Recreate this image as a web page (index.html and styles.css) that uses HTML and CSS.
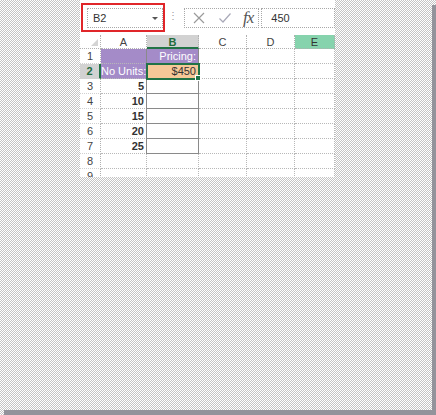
FILE: index.html
```html
<!DOCTYPE html>
<html>
<head>
<meta charset="utf-8">
<link rel="stylesheet" href="styles.css">
</head>
<body>
<div class="page">
  <div class="panel">
    <div class="fbar">
      <div class="namewrap">
        <div class="namebox"><span>B2</span><span class="arrow"></span></div>
      </div>
      <div class="sep">&#8942;</div>
      <div class="btns">
        <svg class="ico" width="14" height="14" viewBox="0 0 14 14"><path d="M2 2 L12 12 M12 2 L2 12" stroke="#9a9a9a" stroke-width="1.2" fill="none"/></svg>
        <svg class="ico" width="14" height="14" viewBox="0 0 14 14"><path d="M1.5 7.5 L5 11 L12.5 2.5" stroke="#a9a9b8" stroke-width="1.2" fill="none"/></svg>
        <span class="fx">fx</span>
      </div>
      <div class="input">450</div>
    </div>
    <div class="grid">
      <div class="corner"><span class="tri"></span></div>
      <div class="ch">A</div>
      <div class="ch chsel">B</div>
      <div class="ch">C</div>
      <div class="ch">D</div>
      <div class="ch che">E</div>

      <div class="rh">1</div>
      <div class="c purple"></div>
      <div class="c purple bcol txt-w">Pricing:</div>
      <div class="c"></div><div class="c"></div><div class="c"></div>

      <div class="rh rhsel">2</div>
      <div class="c purple txt-w">No Units:</div>
      <div class="c orange sel">$450<span class="handle"></span></div>
      <div class="c"></div><div class="c"></div><div class="c"></div>

      <div class="rh">3</div>
      <div class="c num">5</div>
      <div class="c bcol"></div>
      <div class="c"></div><div class="c"></div><div class="c"></div>

      <div class="rh">4</div>
      <div class="c num">10</div>
      <div class="c bcol"></div>
      <div class="c"></div><div class="c"></div><div class="c"></div>

      <div class="rh">5</div>
      <div class="c num">15</div>
      <div class="c bcol"></div>
      <div class="c"></div><div class="c"></div><div class="c"></div>

      <div class="rh">6</div>
      <div class="c num">20</div>
      <div class="c bcol"></div>
      <div class="c"></div><div class="c"></div><div class="c"></div>

      <div class="rh">7</div>
      <div class="c num">25</div>
      <div class="c bcol"></div>
      <div class="c"></div><div class="c"></div><div class="c"></div>

      <div class="rh">8</div>
      <div class="c"></div><div class="c"></div>
      <div class="c"></div><div class="c"></div><div class="c"></div>

      <div class="rh">9</div>
      <div class="c"></div><div class="c"></div>
      <div class="c"></div><div class="c"></div><div class="c"></div>
    </div>
  </div>
</div>
</body>
</html>
```

FILE: styles.css
```css
html, body {
  margin: 0;
  padding: 0;
}
body {
  width: 436px;
  height: 415px;
  background-color: #ffffff;
  background-image: conic-gradient(#c4c4c4 25%, #ffffff 0 50%, #c4c4c4 0 75%, #ffffff 0);
  background-size: 2px 2px;
  font-family: "Liberation Sans", Arial, sans-serif;
  font-size: 11px;
  color: #333;
  overflow: hidden;
}
.page {
  width: 432px;
  height: 410px;
  background-color: #ffffff;
  background-image: conic-gradient(#c4c4c4 25%, #ffffff 0 50%, #c4c4c4 0 75%, #ffffff 0);
  background-size: 2px 2px;
  box-shadow: 4px 5px 0 0 #93939b;
}
.panel {
  margin-left: 80px;
  width: 255px;
  height: 177px;
  background: #fff;
  overflow: hidden;
}
.fbar {
  display: flex;
  align-items: flex-start;
  height: 35px;
}
.namewrap {
  margin-top: 3px;
  margin-left: 1px;
  border: 2px solid #e0262a;
  padding: 3px 0 0 4px;
  box-sizing: border-box;
  width: 85px;
  height: 29px;
}
.namebox {
  width: 76px;
  height: 20px;
  box-sizing: border-box;
  border: 1px dotted #a8a8a8;
  display: flex;
  align-items: center;
  justify-content: space-between;
  padding: 0 4px 0 5px;
  color: #333;
}
.arrow {
  width: 0;
  height: 0;
  border-left: 3px solid transparent;
  border-right: 3px solid transparent;
  border-top: 3px solid #555;
}
.sep {
  margin-left: 3px;
  margin-top: 10px;
  width: 10px;
  color: #999;
  font-size: 10px;
  line-height: 12px;
}
.btns {
  margin-left: 6px;
  margin-top: 8px;
  width: 82px;
  height: 20px;
  box-sizing: border-box;
  border: 1px dotted #a8a8a8;
  display: flex;
  align-items: center;
  padding-left: 7px;
  gap: 12px;
}
.ico {
  display: block;
}
.fx {
  font-family: "Liberation Serif", "Times New Roman", serif;
  font-style: italic;
  font-size: 17px;
  line-height: 18px;
  color: #555;
  margin-left: -1px;
  letter-spacing: -1px;
}
.input {
  margin-left: 2px;
  margin-top: 8px;
  width: 80px;
  height: 20px;
  box-sizing: border-box;
  border: 1px dotted #a8a8a8;
  padding-left: 9px;
  line-height: 18px;
  color: #333;
}
.grid {
  display: grid;
  grid-template-columns: 21px 46px 52px 48px 48px 40px;
  grid-template-rows: 14px repeat(9, 15px);
}
.corner {
  position: relative;
  border-right: 1px dotted #b0b0b0;
  border-bottom: 1px dotted #b0b0b0;
}
.tri {
  position: absolute;
  right: 2px;
  bottom: 2px;
  width: 0;
  height: 0;
  border-left: 7px solid transparent;
  border-bottom: 7px solid #d4d4d4;
}
.ch {
  text-align: center;
  line-height: 14px;
  color: #444;
  border-right: 1px dotted #b0b0b0;
  border-bottom: 1px dotted #b0b0b0;
}
.chsel {
  background: #d2d2d2;
  color: #1f6b3c;
  font-weight: bold;
  border-bottom: 2px solid #217346;
}
.che {
  background: #86d3ad;
  color: #333;
}
.rh {
  text-align: center;
  line-height: 15px;
  color: #444;
  border-right: 1px dotted #b0b0b0;
  border-bottom: 1px dotted #d0d0d0;
}
.rhsel {
  background: #d2d2d2;
  color: #1f6b3c;
  font-weight: bold;
  border-right: 2px solid #217346;
}
.c {
  border-right: 1px dotted #b8b8b8;
  border-bottom: 1px dotted #b8b8b8;
  text-align: right;
  line-height: 15px;
  padding-right: 2px;
  white-space: nowrap;
  overflow: visible;
}
.purple {
  background: #a48bc8;
}
.txt-w {
  color: #fff;
}
.orange {
  background: #f6c898;
  color: #333;
}
.sel {
  position: relative;
  outline: 2px solid #217346;
  outline-offset: -1px;
  z-index: 1;
}
.handle {
  position: absolute;
  right: -3px;
  bottom: -3px;
  width: 4px;
  height: 4px;
  background: #217346;
  border: 1px solid #fff;
}
.num {
  font-weight: bold;
  color: #333;
}
.bcol {
  border-left: 1px solid #8a8a8a;
  border-right: 1px solid #8a8a8a;
  border-bottom: 1px solid #8a8a8a;
  margin-left: -1px;
}
```
